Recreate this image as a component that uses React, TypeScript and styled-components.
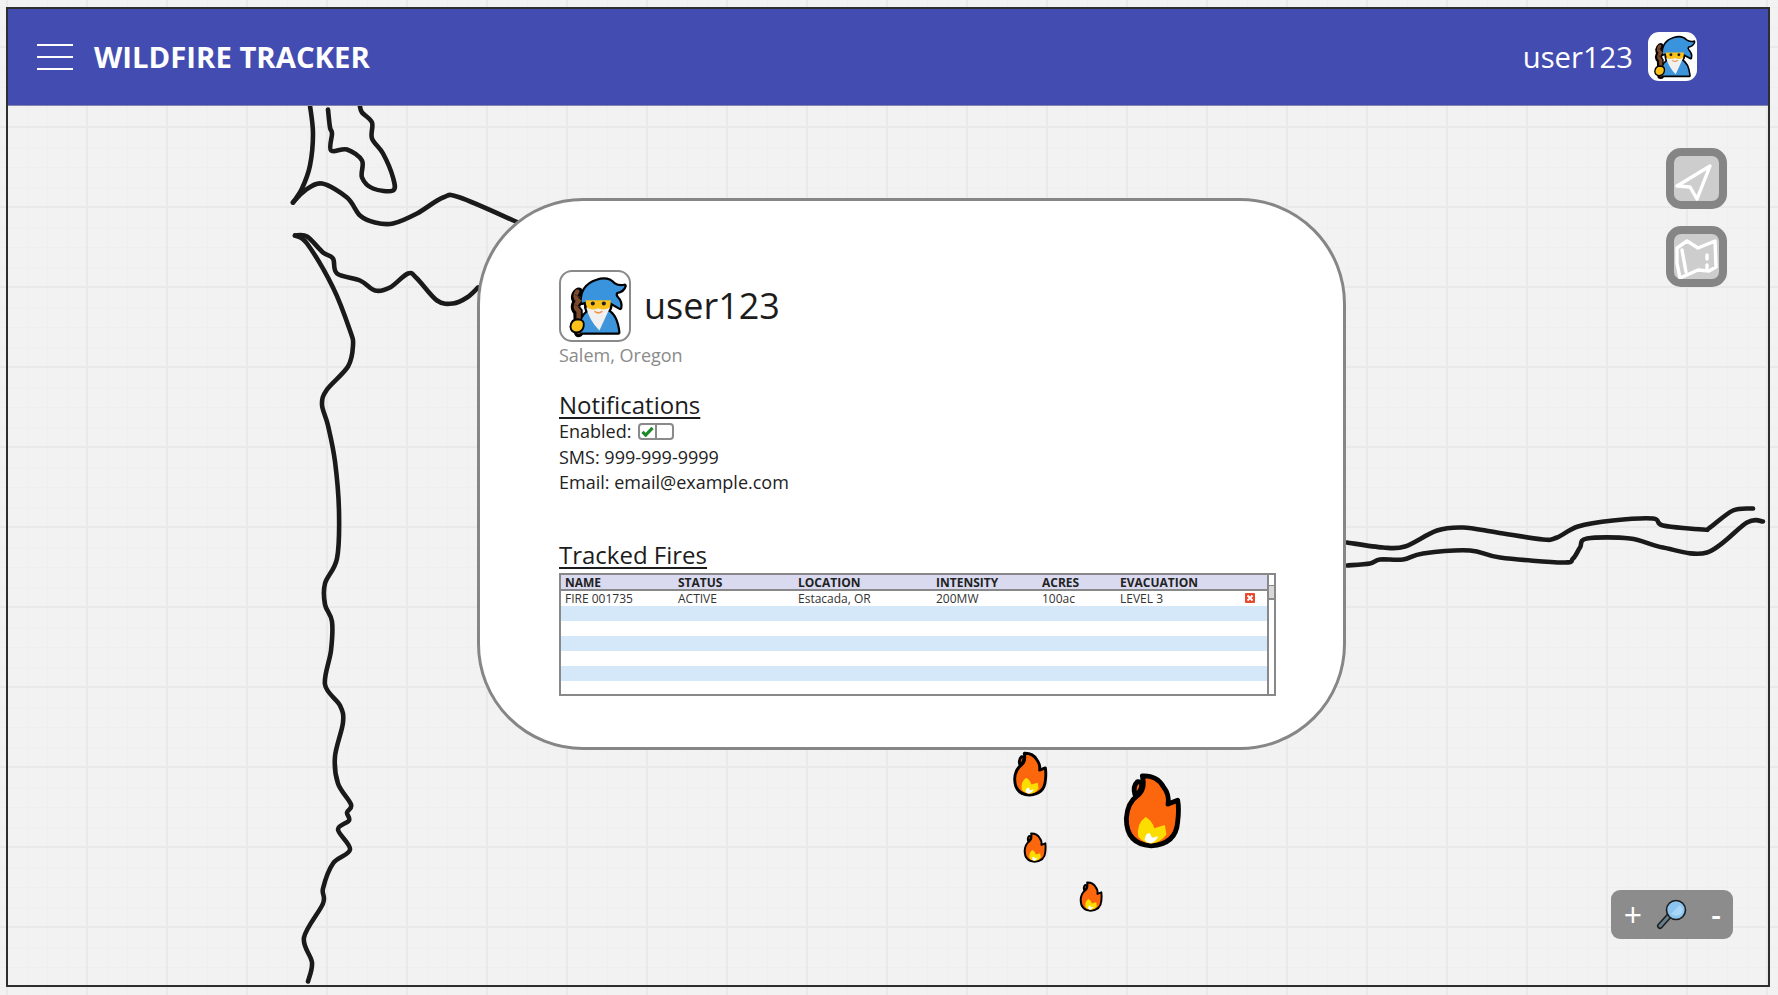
import React from "react";
import styled, { createGlobalStyle } from "styled-components";

interface Point {
  x: number;
  y: number;
}

type Pair = [number, number];

const GlobalStyle = createGlobalStyle`
  html, body {
    margin: 0;
    padding: 0;
    overflow: hidden;
    font-family: "Open Sans", "Liberation Sans", sans-serif;
  }
`;

const Page = styled.div`
  box-sizing: border-box;
  width: 1778px;
  height: 995px;
  padding: 7px 0 0 6px;
  background-color: #f2f2f2;
  background-image: linear-gradient(#e9e9e9 2px, transparent 2px),
    linear-gradient(90deg, #e9e9e9 2px, transparent 2px),
    linear-gradient(#efefef 1px, transparent 1px),
    linear-gradient(90deg, #efefef 1px, transparent 1px);
  background-size: 80px 80px, 80px 80px, 20px 20px, 20px 20px;
  background-position: 6px 46px, 6px 46px, 7px 47px, 7px 47px;
`;

const Frame = styled.div`
  box-sizing: border-box;
  width: 1764px;
  height: 980px;
  border: 2px solid #2e2e2e;
  display: flex;
  flex-direction: column;
`;

const Header = styled.header`
  box-sizing: border-box;
  height: 97px;
  flex: none;
  background: #434db1;
  border-bottom: 1px solid #7f84a8;
  display: flex;
  align-items: center;
  padding: 0 71px 0 29px;
  color: #ffffff;
`;

const MenuButton = styled.svg`
  display: block;
  width: 36px;
  height: 26px;
  margin-right: 21px;
`;

const Title = styled.h1`
  margin: 0;
  font-size: 29.3px;
  font-weight: 700;
  line-height: 40px;
  flex: 1;
`;

const UserName = styled.span`
  font-size: 29.2px;
  font-weight: 400;
  margin-right: 15px;
`;

const HeaderAvatar = styled.span`
  display: block;
  width: 49px;
  height: 49px;
  margin-bottom: 2px;
  border-radius: 11px;
  background: #ffffff;
`;

const MapCanvas = styled.main`
  position: relative;
  flex: 1;
  overflow: hidden;
`;

const CoastLayer = styled.svg`
  position: absolute;
  inset: 0;
  width: 100%;
  height: 100%;
`;

const FirePin = styled.svg<{ $x: number; $y: number; $w: number; $h: number }>`
  position: absolute;
  left: ${(p) => p.$x - 8}px;
  top: ${(p) => p.$y - 106}px;
  width: ${(p) => p.$w}px;
  height: ${(p) => p.$h}px;
`;

const MapTools = styled.div`
  position: absolute;
  top: 42px;
  right: 41px;
  display: flex;
  flex-direction: column;
  gap: 17px;
`;

const MapTool = styled.button`
  box-sizing: border-box;
  width: 61px;
  height: 61px;
  padding: 0;
  border: 8px solid #858585;
  border-radius: 15px;
  background: #cdcdcd;
  display: block;
`;

const ZoomBar = styled.div`
  position: absolute;
  right: 35px;
  bottom: 46px;
  width: 122px;
  height: 49px;
  border-radius: 9px;
  background: #8c8c8c;
  color: #ffffff;
  display: grid;
  grid-template-columns: 44px 34px 44px;
  align-items: center;
  justify-items: center;
`;

const ZoomPlus = styled.span`
  font-size: 32px;
  line-height: 49px;
`;

const ZoomMinus = styled.span`
  font-size: 30px;
  font-weight: 600;
  line-height: 49px;
  padding-left: 10px;
`;

const Modal = styled.section`
  box-sizing: border-box;
  position: absolute;
  left: 469px;
  top: 92px;
  width: 869px;
  height: 552px;
  padding: 69px 67px 0 79px;
  background: #ffffff;
  border: 3px solid #868686;
  border-radius: 106px;
  color: #1c1c1c;
`;

const ProfileRow = styled.div`
  display: flex;
  align-items: center;
  gap: 13px;
`;

const ProfileAvatar = styled.span`
  box-sizing: border-box;
  display: block;
  width: 72px;
  height: 72px;
  border: 2px solid #8a8a8a;
  border-radius: 13px;
`;

const ProfileName = styled.div`
  font-size: 36px;
  font-weight: 400;
  line-height: 50px;
`;

const Place = styled.div`
  font-size: 18px;
  line-height: 24px;
  color: #8a8a8a;
  margin-top: 1px;
`;

const SectionTitle = styled.h2<{ $gap: number }>`
  margin: ${(p) => p.$gap}px 0 0;
  font-size: 24px;
  font-weight: 400;
  line-height: 29px;
  text-decoration: underline;
  text-decoration-thickness: 2px;
  text-underline-offset: 3px;
`;

const InfoLine = styled.div`
  display: flex;
  align-items: center;
  font-size: 18px;
  line-height: 25.5px;
  color: #222222;
`;

const Toggle = styled.span`
  box-sizing: border-box;
  display: flex;
  width: 36px;
  height: 17px;
  margin-left: 7px;
  border: 2px solid #8a8a8a;
  border-radius: 4px;
`;

const ToggleCell = styled.span<{ $on?: boolean }>`
  flex: 1;
  display: flex;
  align-items: center;
  justify-content: center;
  border-right: ${(p) => (p.$on ? "2px solid #8a8a8a" : "none")};
`;

const TableBox = styled.div`
  box-sizing: border-box;
  display: flex;
  width: 717px;
  height: 123px;
  margin-top: 4px;
  border: 2px solid #888888;
`;

const TableBody = styled.div`
  flex: 1;
  min-width: 0;
  overflow: hidden;
`;

const columns = "113px 120px 138px 106px 78px 125px 1fr";

const HeadRow = styled.div`
  display: grid;
  grid-template-columns: ${columns};
  box-sizing: border-box;
  height: 16px;
  padding-left: 4px;
  background: #d9daef;
  border-bottom: 2px solid #888888;
  font-size: 12px;
  font-weight: 700;
  line-height: 15px;
  color: #222222;
`;

const Row = styled.div<{ $shade: boolean }>`
  display: grid;
  grid-template-columns: ${columns};
  align-items: center;
  height: 15px;
  padding-left: 4px;
  background: ${(p) => (p.$shade ? "#d4e8fa" : "#ffffff")};
  font-size: 12px;
  line-height: 15px;
  color: #333333;
`;

const ScrollTrack = styled.div`
  box-sizing: border-box;
  width: 7px;
  flex: none;
  border-left: 2px solid #888888;
  background: #ffffff;
`;

const ScrollArrow = styled.div`
  height: 10px;
  border-bottom: 1px solid #888888;
`;

const ScrollThumb = styled.div`
  height: 12px;
  background: #d8d8d8;
  border-bottom: 2px solid #888888;
`;

const smooth = (pts: Pair[]): string => {
  const points: Point[] = pts.map(([x, y]) => ({ x, y }));
  let d = `M${points[0].x} ${points[0].y}`;
  for (let i = 0; i < points.length - 1; i++) {
    const p0 = points[i - 1] || points[i];
    const p1 = points[i];
    const p2 = points[i + 1];
    const p3 = points[i + 2] || p2;
    const c1x = p1.x + (p2.x - p0.x) / 6;
    const c1y = p1.y + (p2.y - p0.y) / 6;
    const c2x = p2.x - (p3.x - p1.x) / 6;
    const c2y = p2.y - (p3.y - p1.y) / 6;
    d += ` C${c1x} ${c1y} ${c2x} ${c2y} ${p2.x} ${p2.y}`;
  }
  return d;
};

const coastLines: Pair[][] = [
  [[310, 105], [313, 133], [310, 165], [302, 188], [293, 202]],
  [[293, 202], [305, 190], [322, 183], [347, 197], [360, 215], [375, 222], [393, 223], [417, 213], [443, 197], [460, 197], [518, 222]],
  [[328, 109], [330, 127], [332, 133], [331, 150], [347, 149], [362, 160], [362, 177], [373, 188], [393, 190], [393, 177], [383, 153], [372, 138], [372, 122], [362, 112], [360, 106]],
  [[295, 235], [307, 236], [323, 252], [333, 258], [337, 273], [360, 280], [375, 290], [390, 287], [408, 273], [417, 278], [437, 300], [453, 303], [467, 297], [478, 287]],
  [[295, 235], [307, 243], [333, 287], [350, 330], [353, 345], [348, 366], [327, 389], [322, 404], [328, 425], [335, 461], [339, 511], [337, 558], [325, 583], [325, 604], [332, 621], [331, 650], [325, 684], [340, 705], [343, 722], [335, 756], [338, 783], [351, 804], [347, 812], [349, 820], [338, 829], [350, 849], [333, 863], [323, 888], [323, 903], [304, 937], [312, 962], [308, 981]],
  [[1347, 542], [1383, 547], [1405, 546], [1437, 530], [1463, 527], [1497, 532], [1543, 539], [1557, 537], [1578, 526], [1613, 520], [1653, 518], [1663, 525], [1703, 529], [1710, 527], [1733, 510], [1753, 508]],
  [[1347, 565], [1370, 563], [1380, 559], [1403, 559], [1423, 553], [1470, 550], [1500, 557], [1563, 562], [1573, 558], [1580, 547], [1587, 538], [1630, 538], [1663, 547], [1707, 552], [1747, 522], [1763, 521]],
];

const fires = [
  { x: 1012, y: 751, w: 36, h: 46 },
  { x: 1122, y: 772, w: 60, h: 77 },
  { x: 1023, y: 832, w: 24, h: 31 },
  { x: 1079, y: 881, w: 24, h: 31 },
];

const tableHead = ["NAME", "STATUS", "LOCATION", "INTENSITY", "ACRES", "EVACUATION"];
const fireRow = ["FIRE 001735", "ACTIVE", "Estacada, OR", "200MW", "100ac", "LEVEL 3"];

const WizardShapes: React.FC = () => (
  <>
    <path d="M74 204 L76 170 Q82 146 104 136 L160 136 Q188 150 194 204 Z" fill="#3f95dc" />
    <path d="M78 110 Q76 56 126 40 Q160 28 180 50 Q195 60 214 56 Q210 72 188 76 Q182 84 190 94 Q204 108 200 126 L164 106 L92 106 Z" fill="#3a93dd" />
    <path d="M90 102 L170 102 Q172 130 152 142 L110 142 Q90 130 90 102 Z" fill="#fcc21b" />
    <path d="M92 124 Q108 136 130 127 Q152 136 168 124 L134 198 Q102 166 92 124 Z" fill="#f0f0f0" />
  </>
);

const Wizard: React.FC = () => (
  <svg viewBox="12 12 216 216" width="100%" height="100%" style={{ display: "block" }}>
    <path d="M68 76 Q50 90 66 106 Q50 122 66 138 L68 204" fill="none" stroke="#000" strokeWidth="30" strokeLinecap="round" />
    <g stroke="#000" strokeWidth="14" strokeLinejoin="round">
      <WizardShapes />
    </g>
    <WizardShapes />
    <path d="M64 74 Q50 90 68 104 Q50 122 68 136 L68 202" fill="none" stroke="#7b4a2b" strokeWidth="14" strokeLinecap="round" />
    <path d="M56 84 L76 94 M56 116 L76 126" stroke="#4e2d18" strokeWidth="3" />
    <path d="M42 186 Q44 162 66 162 Q88 164 84 184 Q82 202 62 204 Q44 204 42 186 Z" fill="#fcc21b" stroke="#000" strokeWidth="6" />
    <circle cx="113" cy="112" r="6.5" fill="#222" />
    <circle cx="148" cy="112" r="6.5" fill="#222" />
    <path d="M120 138 Q130 146 142 138" fill="none" stroke="#ef9645" strokeWidth="5" strokeLinecap="round" />
  </svg>
);

const Flame: React.FC = () => (
  <>
    <path d="M62 86 Q54 60 70 45 Q86 44 82 60 Q80 78 62 86 Z" fill="#fc670e" stroke="#000" strokeWidth="15" strokeLinejoin="round" />
    <path d="M85 27 Q130 25 150 60 Q170 85 165 115 L195 103 Q200 130 195 170 Q190 240 112 245 Q35 240 35 160 Q38 110 70 88 Q95 70 85 27 Z" fill="#fc670e" stroke="#000" strokeWidth="15" strokeLinejoin="round" />
    <path d="M72 216 Q66 176 95 155 Q115 165 122 190 L155 180 L160 210 Q140 237 112 238 Q85 235 72 216 Z" fill="#fcdd00" />
    <path d="M92 226 Q94 206 108 205 L115 220 L135 215 Q125 235 108 237 Q97 235 92 226 Z" fill="#ffffff" />
  </>
);

const App: React.FC = () => {
  return (
    <Page>
      <GlobalStyle />
      <Frame>
        <Header>
          <MenuButton viewBox="0 0 36 26">
            <path d="M0 1 H36 M0 13 H36 M0 25 H36" stroke="#ffffff" strokeWidth="2" />
          </MenuButton>
          <Title>WILDFIRE TRACKER</Title>
          <UserName>user123</UserName>
          <HeaderAvatar>
            <Wizard />
          </HeaderAvatar>
        </Header>
        <MapCanvas>
          <CoastLayer viewBox="8 106 1760 878" fill="none" stroke="#1a1a1a" strokeWidth="4.6" strokeLinecap="round" strokeLinejoin="round">
            {coastLines.map((line, i) => (
              <path key={i} d={smooth(line)} />
            ))}
          </CoastLayer>
          {fires.map((f) => (
            <FirePin key={`${f.x}-${f.y}`} $x={f.x} $y={f.y} $w={f.w} $h={f.h} viewBox="25 15 180 240">
              <Flame />
            </FirePin>
          ))}
          <MapTools>
            <MapTool>
              <svg viewBox="0 0 45 45" width="45" height="45" style={{ display: "block" }}>
                <path d="M36 10 L3 30 L16 31 L23 43 Z" fill="none" stroke="#ffffff" strokeWidth="3.4" strokeLinejoin="round" />
              </svg>
            </MapTool>
            <MapTool>
              <svg viewBox="0 0 45 45" width="45" height="45" style={{ display: "block" }} fill="none" stroke="#ffffff" strokeWidth="3.4" strokeLinejoin="round" strokeLinecap="round">
                <path d="M3 14 L13 7 L24 14 L41 7 L42 33 L35 37 L24 36 L6 44 L3 29 Z" />
                <path d="M8 16 L12 38" />
                <path d="M33 21 L33 25 M33 31 L33 34" />
              </svg>
            </MapTool>
          </MapTools>
          <ZoomBar>
            <ZoomPlus>+</ZoomPlus>
            <svg viewBox="0 0 32 32" width="32" height="32">
              <path d="M4 27 L13 17" stroke="#1c1c1c" strokeWidth="6" strokeLinecap="round" />
              <path d="M4 27 L13 17" stroke="#64808a" strokeWidth="3" strokeLinecap="round" />
              <circle cx="20" cy="11" r="9.5" fill="#8cc4f0" stroke="#1c1c1c" strokeWidth="1.6" />
              <path d="M15 15 L24 6 Q28 10 26 14 Q22 19 15 15 Z" fill="#a9d6f7" />
            </svg>
            <ZoomMinus>-</ZoomMinus>
          </ZoomBar>
          <Modal>
            <ProfileRow>
              <ProfileAvatar>
                <Wizard />
              </ProfileAvatar>
              <ProfileName>user123</ProfileName>
            </ProfileRow>
            <Place>Salem, Oregon</Place>
            <SectionTitle $gap={23}>Notifications</SectionTitle>
            <InfoLine>
              Enabled:
              <Toggle>
                <ToggleCell $on>
                  <svg viewBox="0 0 14 12" width="13" height="11">
                    <path d="M1.5 6.5 L5 10 L12.5 2" fill="none" stroke="#1f8a2a" strokeWidth="3.4" />
                  </svg>
                </ToggleCell>
                <ToggleCell />
              </Toggle>
            </InfoLine>
            <InfoLine>SMS: 999-999-9999</InfoLine>
            <InfoLine>Email: email@example.com</InfoLine>
            <SectionTitle $gap={44}>Tracked Fires</SectionTitle>
            <TableBox>
              <TableBody>
                <HeadRow>
                  {tableHead.map((label) => (
                    <span key={label}>{label}</span>
                  ))}
                </HeadRow>
                {[0, 1, 2, 3, 4, 5, 6].map((i) => (
                  <Row key={i} $shade={i % 2 === 1}>
                    {i === 0 &&
                      fireRow.map((cell) => <span key={cell}>{cell}</span>)}
                    {i === 0 && (
                      <svg viewBox="0 0 10 10" width="10" height="10">
                        <rect width="10" height="10" rx="1" fill="#e8492e" />
                        <path d="M2.5 2.5 L7.5 7.5 M7.5 2.5 L2.5 7.5" stroke="#ffffff" strokeWidth="1.8" />
                      </svg>
                    )}
                  </Row>
                ))}
              </TableBody>
              <ScrollTrack>
                <ScrollArrow />
                <ScrollThumb />
              </ScrollTrack>
            </TableBox>
          </Modal>
        </MapCanvas>
      </Frame>
    </Page>
  );
};

export default App;
